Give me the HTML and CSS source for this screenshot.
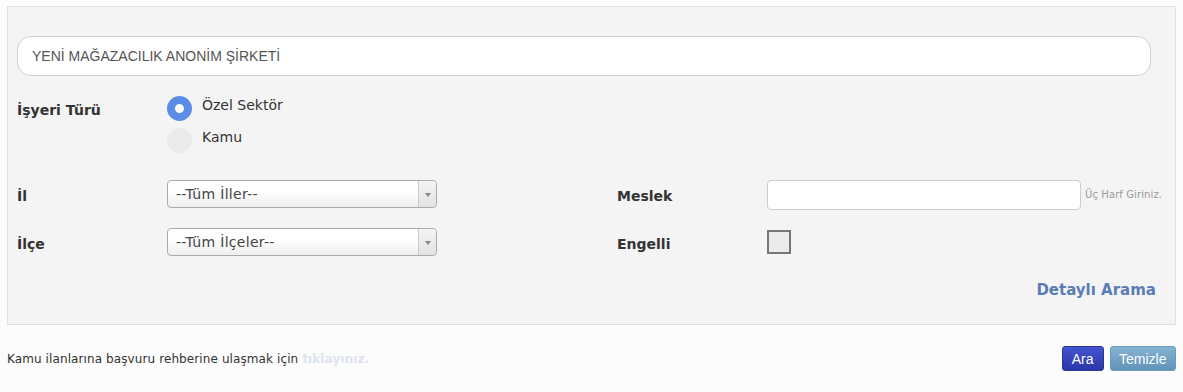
FILE: index.html
```html
<!DOCTYPE html>
<html lang="tr">
<head>
    <meta charset="UTF-8">
    <title>İş İlanı Arama</title>
    <link rel="stylesheet" href="styles.css">
</head>
<body>
    <div class="panel">
        <input type="text" class="company" value="YENİ MAĞAZACILIK ANONİM ŞİRKETİ">

        <div class="row type-row">
            <div class="label">İşyeri Türü</div>
            <div class="radios">
                <label class="radio"><span class="dot checked"></span>Özel Sektör</label>
                <label class="radio"><span class="dot"></span>Kamu</label>
            </div>
        </div>

        <div class="grid">
            <div class="label">İl</div>
            <div class="select"><span>--Tüm İller--</span><span class="arrow"></span></div>
            <div class="label">Meslek</div>
            <div class="job">
                <input type="text" class="job-input">
                <span class="hint">Üç Harf Giriniz.</span>
            </div>

            <div class="label">İlçe</div>
            <div class="select"><span>--Tüm İlçeler--</span><span class="arrow"></span></div>
            <div class="label">Engelli</div>
            <div><span class="check"></span></div>
        </div>

        <div class="detail"><a href="#">Detaylı Arama</a></div>
    </div>

    <div class="footer">
        <div class="note">Kamu ilanlarına başvuru rehberine ulaşmak için <a href="#">tıklayınız.</a></div>
        <div class="buttons">
            <button class="btn btn-search">Ara</button>
            <button class="btn btn-clear">Temizle</button>
        </div>
    </div>
</body>
</html>
```

FILE: styles.css
```css
body {
    margin: 0;
    background-color: #fcfcfc;
    font-family: "DejaVu Sans", Verdana, sans-serif;
    color: #333;
}
.panel {
    margin: 6px 7px 0;
    height: 319px;
    box-sizing: border-box;
    background-color: #f4f4f4;
    border: 1px solid #e0e0e0;
    padding: 29px 24px 0 9px;
}
.company {
    display: block;
    width: 100%;
    height: 40px;
    box-sizing: border-box;
    border: 1px solid #cfcfcf;
    border-radius: 14px;
    background: #fff;
    padding: 0 14px;
    font-family: "Liberation Sans", Arial, sans-serif;
    font-size: 14px;
    color: #555;
}
.row {
    display: flex;
}
.type-row {
    margin-top: 20px;
}
.label {
    width: 150px;
    font-size: 14px;
    font-weight: bold;
    color: #333;
}
.type-row .label {
    padding-top: 6px;
}
.radios {
    display: flex;
    flex-direction: column;
    gap: 7px;
}
.radio {
    display: flex;
    align-items: flex-start;
    gap: 10px;
    font-size: 14px;
    line-height: 18px;
    color: #333;
    height: 25px;
}
.dot {
    width: 25px;
    height: 25px;
    border-radius: 50%;
    background-color: #ebebeb;
    box-sizing: border-box;
    flex: none;
}
.dot.checked {
    border: 8px solid #5b8de6;
    background: #fff;
}
.grid {
    margin-top: 27px;
    display: grid;
    grid-template-columns: 150px 270px 180px 150px 1fr;
    grid-template-rows: 28px 28px;
    row-gap: 20px;
    align-items: center;
}
.grid > :nth-child(1) { grid-area: 1 / 1; }
.grid > :nth-child(2) { grid-area: 1 / 2; }
.grid > :nth-child(3) { grid-area: 1 / 4; }
.grid > :nth-child(4) { grid-area: 1 / 5; }
.grid > :nth-child(5) { grid-area: 2 / 1; }
.grid > :nth-child(6) { grid-area: 2 / 2; }
.grid > :nth-child(7) { grid-area: 2 / 4; }
.grid > :nth-child(8) { grid-area: 2 / 5; }
.grid .label {
    padding-top: 3px;
}
.select {
    height: 28px;
    box-sizing: border-box;
    border: 1px solid #aaa;
    border-radius: 4px;
    background: linear-gradient(#fff 40%, #eee);
    display: flex;
    align-items: center;
    justify-content: space-between;
    padding-left: 8px;
    font-size: 14px;
    letter-spacing: 0.3px;
    color: #444;
}
.arrow {
    width: 17px;
    height: 100%;
    border-left: 1px solid #ccc;
    background: linear-gradient(#f4f4f4, #e2e2e2);
    border-radius: 0 4px 4px 0;
    position: relative;
}
.arrow::after {
    content: "";
    position: absolute;
    left: 6px;
    top: 12px;
    border-left: 3px solid transparent;
    border-right: 3px solid transparent;
    border-top: 4px solid #888;
}
.job {
    display: flex;
    align-items: center;
    gap: 4px;
}
.job-input {
    width: 314px;
    height: 30px;
    box-sizing: border-box;
    border: 1px solid #ccc;
    border-radius: 4px;
    background: #fff;
    margin-top: 2px;
}
.hint {
    font-size: 10px;
    letter-spacing: 0.1px;
    color: #999;
    white-space: nowrap;
}
.check {
    display: block;
    width: 24px;
    height: 24px;
    box-sizing: border-box;
    border: 2px solid #777;
    background-color: #ebebeb;
}
.detail {
    text-align: right;
    margin-top: 24px;
    margin-right: -5px;
}
.detail a {
    font-size: 15px;
    font-weight: bold;
    color: #5a7db5;
    text-decoration: none;
}
.footer {
    display: flex;
    justify-content: space-between;
    align-items: center;
    margin: 21px 7px 0;
}
.note {
    font-size: 12px;
    letter-spacing: 0.1px;
    color: #333;
}
.note a {
    color: #dde4f0;
    font-weight: bold;
    text-decoration: none;
}
.buttons {
    display: flex;
    gap: 6px;
}
.btn {
    height: 25px;
    border: 1px solid;
    border-radius: 3px;
    color: #fff;
    font-family: "Liberation Sans", Arial, sans-serif;
    font-size: 14px;
    padding: 0 9px;
    cursor: pointer;
}
.btn-search {
    background: linear-gradient(#4254d0, #2b37a8);
    border-color: #2a3598;
}
.btn-clear {
    background: linear-gradient(#86b3d2, #5f93b8);
    border-color: #6b9bbd;
    padding: 0 8.5px;
}
```
